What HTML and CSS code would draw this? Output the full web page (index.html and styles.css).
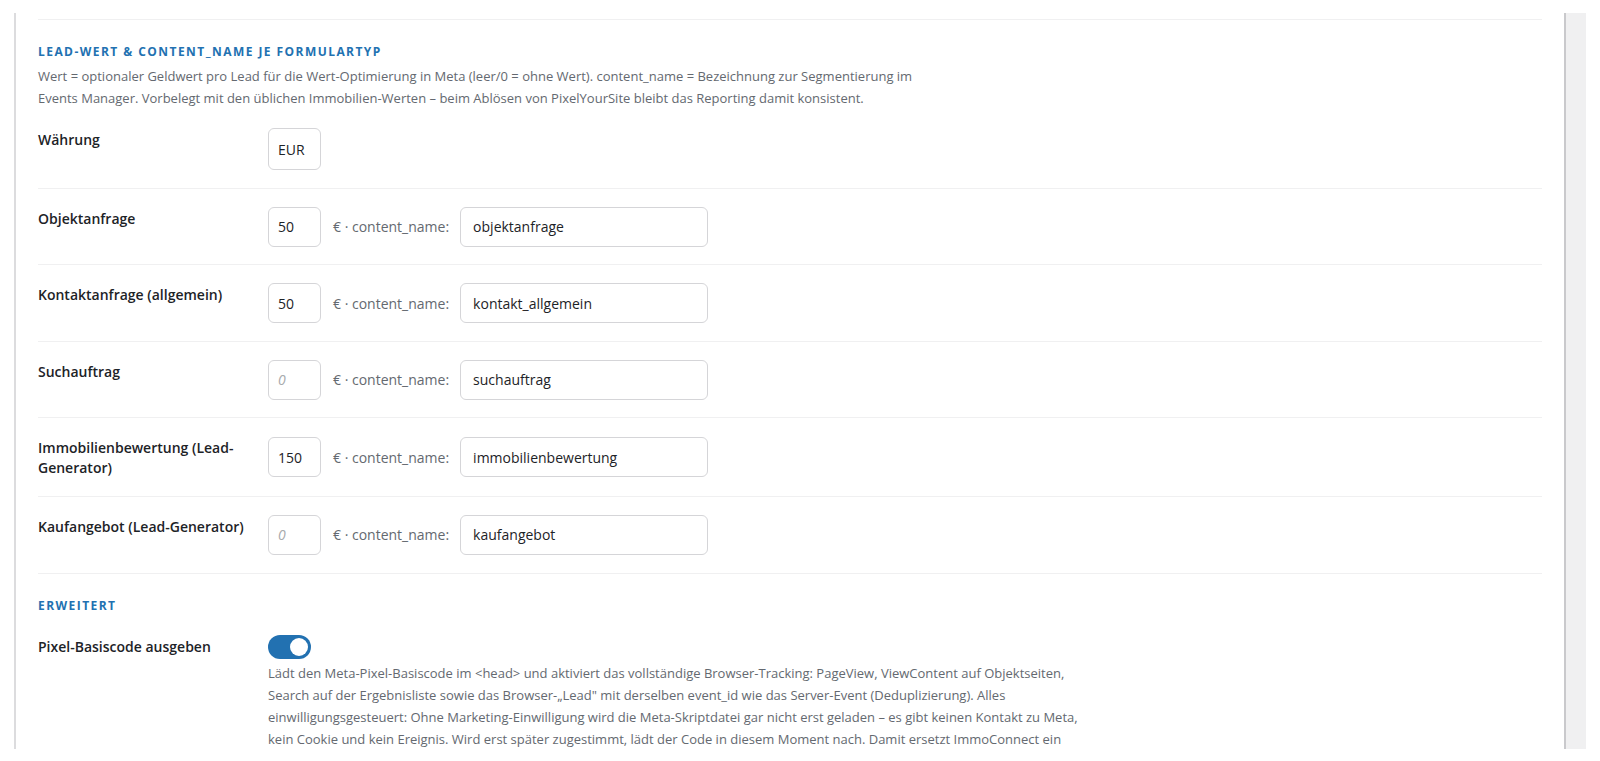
FILE: index.html
```html
<!DOCTYPE html>
<html lang="de">
<head>
<meta charset="utf-8">
<title>Meta Pixel Einstellungen</title>
<link rel="stylesheet" href="styles.css">
</head>
<body>
<div class="frame">
  <div class="content">
    <div class="prev-row"></div>

    <h3 class="section-title">Lead-Wert &amp; content_name je Formulartyp</h3>
    <p class="section-desc">Wert = optionaler Geldwert pro Lead für die Wert-Optimierung in Meta (leer/0 = ohne Wert). content_name = Bezeichnung zur Segmentierung im Events Manager. Vorbelegt mit den üblichen Immobilien-Werten – beim Ablösen von PixelYourSite bleibt das Reporting damit konsistent.</p>

    <div class="rows">
      <div class="row">
        <div class="row-label">Währung</div>
        <div class="row-field">
          <input class="num num-currency" type="text" value="EUR">
        </div>
      </div>
      <div class="row">
        <div class="row-label">Objektanfrage</div>
        <div class="row-field">
          <input class="num" type="text" value="50">
          <span class="unit">€ · content_name:</span>
          <input class="name" type="text" value="objektanfrage">
        </div>
      </div>
      <div class="row">
        <div class="row-label">Kontaktanfrage (allgemein)</div>
        <div class="row-field">
          <input class="num" type="text" value="50">
          <span class="unit">€ · content_name:</span>
          <input class="name" type="text" value="kontakt_allgemein">
        </div>
      </div>
      <div class="row">
        <div class="row-label">Suchauftrag</div>
        <div class="row-field">
          <input class="num" type="text" placeholder="0">
          <span class="unit">€ · content_name:</span>
          <input class="name" type="text" value="suchauftrag">
        </div>
      </div>
      <div class="row">
        <div class="row-label">Immobilienbewertung (Lead-Generator)</div>
        <div class="row-field">
          <input class="num" type="text" value="150">
          <span class="unit">€ · content_name:</span>
          <input class="name" type="text" value="immobilienbewertung">
        </div>
      </div>
      <div class="row">
        <div class="row-label">Kaufangebot (Lead-Generator)</div>
        <div class="row-field">
          <input class="num" type="text" placeholder="0">
          <span class="unit">€ · content_name:</span>
          <input class="name" type="text" value="kaufangebot">
        </div>
      </div>
    </div>

    <h3 class="section-title">Erweitert</h3>

    <div class="row row-plain">
      <div class="row-label">Pixel-Basiscode ausgeben</div>
      <div class="row-field row-field-stack">
        <label class="toggle">
          <input type="checkbox" checked>
          <span class="toggle-track"><span class="toggle-knob"></span></span>
        </label>
        <p class="field-desc">Lädt den Meta-Pixel-Basiscode im &lt;head&gt; und aktiviert das vollständige Browser-Tracking: PageView, ViewContent auf Objektseiten, Search auf der Ergebnisliste sowie das Browser-„Lead" mit derselben event_id wie das Server-Event (Deduplizierung). Alles einwilligungsgesteuert: Ohne Marketing-Einwilligung wird die Meta-Skriptdatei gar nicht erst geladen – es gibt keinen Kontakt zu Meta, kein Cookie und kein Ereignis. Wird erst später zugestimmt, lädt der Code in diesem Moment nach. Damit ersetzt ImmoConnect ein</p>
      </div>
    </div>
  </div>
  <div class="scrollbar"></div>
</div>
</body>
</html>
```

FILE: styles.css
```css
* { box-sizing: border-box; }

html, body {
  margin: 0;
  padding: 0;
  background: #ffffff;
}

body {
  font-family: "Open Sans", "Noto Sans", "Liberation Sans", sans-serif;
  color: #1d2327;
}

.frame {
  display: flex;
  margin: 13px 14px 0 14px;
  height: 736px;
  border-left: 2px solid #dcdcde;
}

.content {
  flex: 1;
  min-width: 0;
  padding: 0 22px 0 22px;
}

.scrollbar {
  width: 22px;
  flex: none;
  background: #f0f0f1;
  border-left: 2px solid #c9c9cc;
}

.prev-row {
  height: 7px;
  border-bottom: 1px solid #f0f0f1;
}

.section-title {
  margin: 24px 0 0;
  font-size: 12px;
  line-height: 16px;
  font-weight: 700;
  letter-spacing: 0.12em;
  text-transform: uppercase;
  color: #2271b1;
}

.section-title + .row {
  margin-top: 3px;
}

.section-desc {
  margin: 5px 0 0;
  max-width: 900px;
  font-size: 13px;
  line-height: 22px;
  color: #646970;
}

.rows {
  margin-top: 1px;
}

.row {
  display: grid;
  grid-template-columns: 230px 1fr;
  padding: 18px 0 17.6px;
  border-bottom: 1px solid #f0f0f1;
}

.row-plain {
  border-bottom: 0;
}

.row-label {
  padding: 2px 20px 0 0;
  font-size: 14px;
  line-height: 20px;
  font-weight: 600;
  color: #1d2327;
}

.row-field {
  display: flex;
  align-items: center;
}

.row-field-stack {
  flex-direction: column;
  align-items: flex-start;
}

input[type="text"] {
  height: 40px;
  margin: 0;
  border: 1px solid #d5d5d8;
  border-radius: 6px;
  background: #ffffff;
  font-family: inherit;
  font-size: 14px;
  color: #1d2327;
  outline: none;
}

input::placeholder {
  color: #a7aaad;
  font-style: italic;
}

.num {
  width: 53px;
  padding: 0 9px;
}

.num-currency {
  height: 42px !important;
}

.name {
  width: 248px;
  padding: 0 12px;
}

.unit {
  margin: 0 11px 0 12px;
  font-size: 14px;
  color: #646970;
}

.toggle {
  display: inline-block;
  cursor: pointer;
}

.toggle input {
  display: none;
}

.toggle-track {
  display: flex;
  align-items: center;
  justify-content: flex-end;
  width: 43px;
  height: 24px;
  padding: 0 3px;
  border-radius: 12px;
  background: #2271b1;
}

.toggle-knob {
  width: 18px;
  height: 18px;
  border-radius: 50%;
  background: #ffffff;
}

.field-desc {
  margin: 3px 0 0;
  max-width: 820px;
  font-size: 13px;
  line-height: 22px;
  color: #646970;
}
```
